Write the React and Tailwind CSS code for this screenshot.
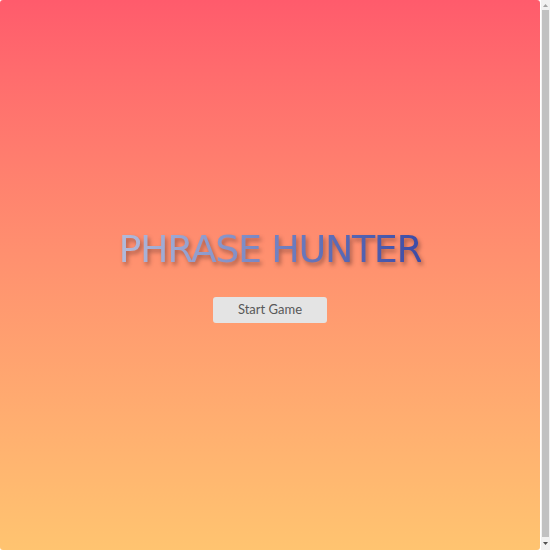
export default function App() {
  return (
    <div className="flex h-[550px] bg-white overflow-hidden">
      <div
        className="w-[540px] h-full rounded-[3px] bg-gradient-to-b from-[#ff5b6c] to-[#ffc470] flex flex-col items-center justify-center"
        style={{ fontFamily: '"DejaVu Sans", "Open Sans", sans-serif' }}
      >
        <h1 className="mt-[3px] text-[38px] tracking-[-1.4px] leading-none bg-gradient-to-r from-[#b3bbdb] to-[#3d4ba6] bg-clip-text text-transparent drop-shadow-[2px_3px_2px_rgba(60,30,30,0.45)]">
          PHRASE HUNTER
        </h1>
        <button
          className="mt-[29px] mb-[1px] w-[114px] h-[26px] rounded-[3px] bg-[#e4e4e4] text-[13px] text-[#585858] leading-none"
          style={{ fontFamily: 'Lato, "Open Sans", sans-serif' }}
        >
          Start Game
        </button>
      </div>
      <div className="ml-[1px] w-[9px] h-full bg-[#f1f1f1] flex flex-col">
        <div className="h-[10px] flex items-center justify-center">
          <svg width="5" height="3" viewBox="0 0 5 3">
            <path d="M0 3 L2.5 0 L5 3 Z" fill="#a3a3a3" />
          </svg>
        </div>
        <div className="flex-1 mx-[1px] bg-[#c1c1c1]" />
        <div className="h-[13px] flex items-center justify-center">
          <svg width="5" height="3" viewBox="0 0 5 3">
            <path d="M0 0 L5 0 L2.5 3 Z" fill="#505050" />
          </svg>
        </div>
      </div>
    </div>
  );
}
